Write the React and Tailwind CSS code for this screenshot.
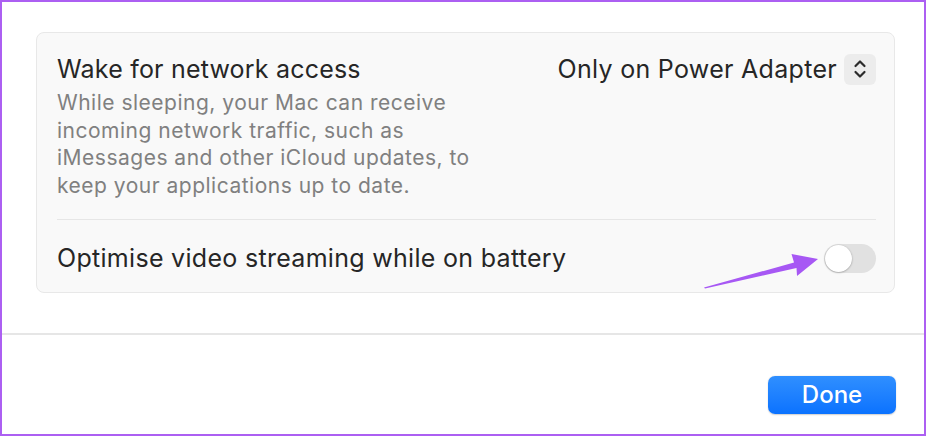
import React from 'react';

const font = { fontFamily: 'Inter, "Noto Sans", sans-serif' };

function Stepper() {
  return (
    <div className="w-[32px] h-[31px] rounded-[6px] bg-[#ececec] flex items-center justify-center">
      <svg width="14" height="22" viewBox="0 0 14 22" fill="none" stroke="#2b2b2b" strokeWidth="2.2" strokeLinecap="round" strokeLinejoin="round">
        <path d="M2.5 8 L7 3.5 L11.5 8" />
        <path d="M2.5 14 L7 18.5 L11.5 14" />
      </svg>
    </div>
  );
}

function Toggle() {
  return (
    <div className="w-[52px] h-[29px] rounded-full bg-[#e1e1e1] p-[1px] flex items-center">
      <div className="w-[27px] h-[27px] rounded-full bg-white shadow-[0_0.5px_2px_rgba(0,0,0,0.35)]" />
    </div>
  );
}

export default function App() {
  return (
    <div className="relative w-[926px] h-[436px] bg-white border-2 border-[#ac5ff2] flex flex-col" style={font}>
      <div className="pl-[34px] pr-[29px] pt-[30px]">
        <div className="w-[859px] h-[261px] rounded-[8px] border border-[#e8e8e8] bg-[#f9f9f9] pl-[20px] pr-[18px] pt-[20px] flex flex-col">
          <div className="flex items-start justify-between">
            <div className="text-[25px] leading-[32px] tracking-[0.2px] text-[#262626]">Wake for network access</div>
            <div className="flex items-center gap-[7px]">
              <span className="text-[25px] leading-[32px] tracking-[0.3px] text-[#262626]">Only on Power Adapter</span>
              <Stepper />
            </div>
          </div>
          <p className="mt-[4px] w-[432px] text-[21px] leading-[27.5px] tracking-[0.5px] text-[#808080]">
            While sleeping, your Mac can receive incoming network traffic, such as iMessages and other iCloud updates, to keep your applications up to date.
          </p>
          <div className="mt-[20px] h-px bg-[#e6e6e6]" />
          <div className="flex-1 flex items-center justify-between pt-[4px]">
            <span className="text-[25px] leading-[32px] tracking-[0.3px] text-[#262626]">Optimise video streaming while on battery</span>
            <Toggle />
          </div>
        </div>
      </div>
      <div className="mt-[40px] h-[2px] bg-[#e6e6e6]" />
      <div className="flex-1 flex justify-end pr-[28px] pt-[41px]">
        <button className="w-[128px] h-[38px] rounded-[7px] bg-gradient-to-b from-[#2f8fff] to-[#0a72ff] text-white text-[24px] font-medium shadow-[0_0.5px_1.5px_rgba(0,0,0,0.2)]">
          Done
        </button>
      </div>
      <svg className="absolute left-[-2px] top-[-2px] pointer-events-none" width="926" height="436" viewBox="0 0 926 436">
        <polygon points="704,287.5 794,262.5 791.5,254 818,259 797,276 796.5,268 705,288.5" fill="#a758f4" />
      </svg>
    </div>
  );
}
